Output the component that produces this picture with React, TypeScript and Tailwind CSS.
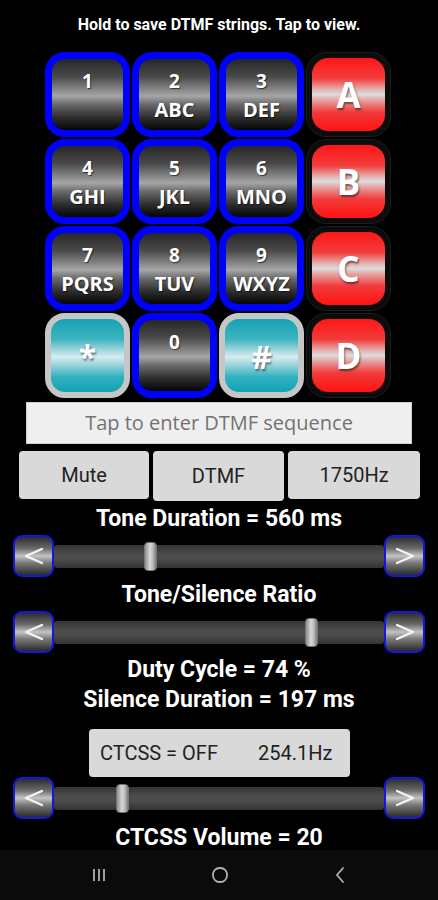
import React from 'react';

type Key = { top: string; sub?: string; kind: 'blue' | 'red' | 'teal' };

const keys: Key[] = [
  { top: '1', kind: 'blue' },
  { top: '2', sub: 'ABC', kind: 'blue' },
  { top: '3', sub: 'DEF', kind: 'blue' },
  { top: 'A', kind: 'red' },
  { top: '4', sub: 'GHI', kind: 'blue' },
  { top: '5', sub: 'JKL', kind: 'blue' },
  { top: '6', sub: 'MNO', kind: 'blue' },
  { top: 'B', kind: 'red' },
  { top: '7', sub: 'PQRS', kind: 'blue' },
  { top: '8', sub: 'TUV', kind: 'blue' },
  { top: '9', sub: 'WXYZ', kind: 'blue' },
  { top: 'C', kind: 'red' },
  { top: '*', kind: 'teal' },
  { top: '0', kind: 'blue' },
  { top: '#', kind: 'teal' },
  { top: 'D', kind: 'red' },
];

const KeyButton = ({ k }: { k: Key }) => {
  if (k.kind === 'red') {
    return (
      <div className="w-[87px] h-[87px] p-[1px]">
        <div className="w-full h-full rounded-[20px] bg-[#0c0c0c] border border-[#1c1c1c] p-[5px]">
          <div className="w-full h-full rounded-[16px] bg-[linear-gradient(to_bottom,#ff1616_0%,#f23c3c_28%,#e6a8a8_42%,#dcdcdc_50%,#e8a0a0_58%,#f23a3a_74%,#ff1212_100%)] flex items-center justify-center">
            <span className="text-white font-bold text-[35px] leading-none [text-shadow:1px_2px_2px_rgba(0,0,0,0.5)]">{k.top}</span>
          </div>
        </div>
      </div>
    );
  }
  if (k.kind === 'teal') {
    return (
      <div className="w-[87px] h-[87px] p-[1px]">
        <div className="w-full h-full rounded-[20px] border-[6px] border-[#c6c6c6] bg-[linear-gradient(to_bottom,#15a3b4_0%,#3fb3c1_28%,#b5dfe3_46%,#d6ecee_52%,#9ed6dc_62%,#2fb0bf_80%,#14a2b3_100%)] flex items-center justify-center">
          <span className="text-white font-bold text-[32px] leading-none [text-shadow:1px_2px_2px_rgba(0,0,0,0.45)] mt-[2px]">{k.top}</span>
        </div>
      </div>
    );
  }
  return (
    <div className="w-[87px] h-[87px] p-[1px]">
      <div className="w-full h-full rounded-[20px] border-[7px] border-[#0000ff] bg-[linear-gradient(to_bottom,#262626_0%,#4a4a4a_25%,#8a8a8a_44%,#a6a6a6_52%,#6a6a6a_64%,#2e2e2e_82%,#050505_100%)] flex flex-col items-center pt-[9px]">
        <span className="text-white font-bold text-[19px] leading-[26px] [text-shadow:1px_1px_1px_rgba(0,0,0,0.6)]">{k.top}</span>
        {k.sub && (
          <span className="text-white font-bold text-[20px] leading-[31px] [text-shadow:1px_1px_1px_rgba(0,0,0,0.6)]">{k.sub}</span>
        )}
      </div>
    </div>
  );
};

const Chevron = ({ dir }: { dir: 'left' | 'right' }) => (
  <svg width="22" height="20" viewBox="0 0 22 20" fill="none" stroke="#f4f4f4" strokeWidth="2.2" strokeLinecap="round" strokeLinejoin="round">
    {dir === 'left' ? <path d="M19 3 L3 10 L19 17" /> : <path d="M3 3 L19 10 L3 17" />}
  </svg>
);

const StepButton = ({ dir }: { dir: 'left' | 'right' }) => (
  <div className="w-[41px] h-[42px] rounded-[9px] border-2 border-[#1515e0] bg-[linear-gradient(to_bottom,#2c2c2c_0%,#6a6a6a_30%,#c4c4c4_50%,#7a7a7a_68%,#2a2a2a_100%)] flex items-center justify-center shrink-0">
    <Chevron dir={dir} />
  </div>
);

const Slider = ({ thumb }: { thumb: number }) => (
  <div className="flex items-center pl-[13px] pr-[13px] h-[42px]">
    <StepButton dir="left" />
    <div className="relative flex-1 h-[23px] rounded-[3px] bg-[linear-gradient(to_bottom,#353535_0%,#4c4c4c_40%,#4c4c4c_60%,#333333_100%)]">
      <div
        className="absolute top-[-3px] w-[13px] h-[29px] rounded-[4px] border border-[#777] bg-[linear-gradient(to_right,#8c8c8c_0%,#d8d8d8_45%,#bdbdbd_70%,#7c7c7c_100%)]"
        style={{ left: thumb }}
      />
    </div>
    <StepButton dir="right" />
  </div>
);

const Label = ({ children, className = '' }: { children: React.ReactNode; className?: string }) => (
  <div className={`text-center text-white font-bold text-[23px] leading-[24px] font-['Roboto',sans-serif] ${className}`}>{children}</div>
);

export default function App() {
  return (
    <div className="w-[438px] h-[900px] bg-black flex flex-col overflow-hidden font-['Open_Sans',sans-serif]">
      <div className="text-center text-white font-bold text-[16px] leading-[16px] pt-[17px] font-['Roboto',sans-serif]">
        Hold to save DTMF strings. Tap to view.
      </div>

      <div className="grid grid-cols-[repeat(4,87px)] ml-[44px] mt-[18px]">
        {keys.map((k) => (
          <KeyButton key={k.top} k={k} />
        ))}
      </div>

      <div className="mx-[26px] mt-[3px] h-[43px] bg-[#efefef] border border-[#d0d0d0] flex items-center justify-center">
        <span className="text-[#737373] text-[20px]">Tap to enter DTMF sequence</span>
      </div>

      <div className="flex gap-[4px] ml-[19px] mt-[7px] font-['Roboto',sans-serif]">
        <div className="w-[130px] h-[48px] rounded-[4px] bg-[#d9d9d9] flex items-center justify-center text-[20px] text-[#222]">Mute</div>
        <div className="w-[131px] h-[50px] rounded-[4px] bg-[#d9d9d9] flex items-center justify-center text-[20px] text-[#222]">DTMF</div>
        <div className="w-[132px] h-[48px] rounded-[4px] bg-[#d9d9d9] flex items-center justify-center text-[20px] text-[#222]">1750Hz</div>
      </div>

      <Label className="mt-[6px]">Tone Duration = 560 ms</Label>
      <div className="mt-[4px]">
        <Slider thumb={90} />
      </div>

      <Label className="mt-[6px]">Tone/Silence Ratio</Label>
      <div className="mt-[4px]">
        <Slider thumb={251} />
      </div>

      <Label className="mt-[5px]">Duty Cycle = 74 %</Label>
      <Label className="mt-[6px]">Silence Duration = 197 ms</Label>

      <div className="ml-[89px] mt-[17px] w-[261px] h-[49px] rounded-[4px] bg-[#d9d9d9] flex items-center font-['Roboto',sans-serif] text-[20px] text-[#222]">
        <span className="ml-[11px]">CTCSS = OFF</span>
        <span className="ml-[40px]">254.1Hz</span>
      </div>

      <Slider thumb={62} />

      <Label className="mt-[7px]">CTCSS Volume = 20</Label>

      <div className="mt-auto h-[51px] bg-[#0b0b0b] flex items-center justify-around px-[40px]">
        <svg width="14" height="14" viewBox="0 0 14 14" stroke="#b0b0b0" strokeWidth="1.8">
          <path d="M2 1 V13 M7 1 V13 M12 1 V13" />
        </svg>
        <svg width="18" height="18" viewBox="0 0 18 18" fill="none" stroke="#b0b0b0" strokeWidth="1.8">
          <rect x="2" y="2" width="14" height="14" rx="6.5" />
        </svg>
        <svg width="12" height="18" viewBox="0 0 12 18" fill="none" stroke="#b0b0b0" strokeWidth="1.8" strokeLinecap="round">
          <path d="M9 2 L3 9 L9 16" />
        </svg>
      </div>
    </div>
  );
}
